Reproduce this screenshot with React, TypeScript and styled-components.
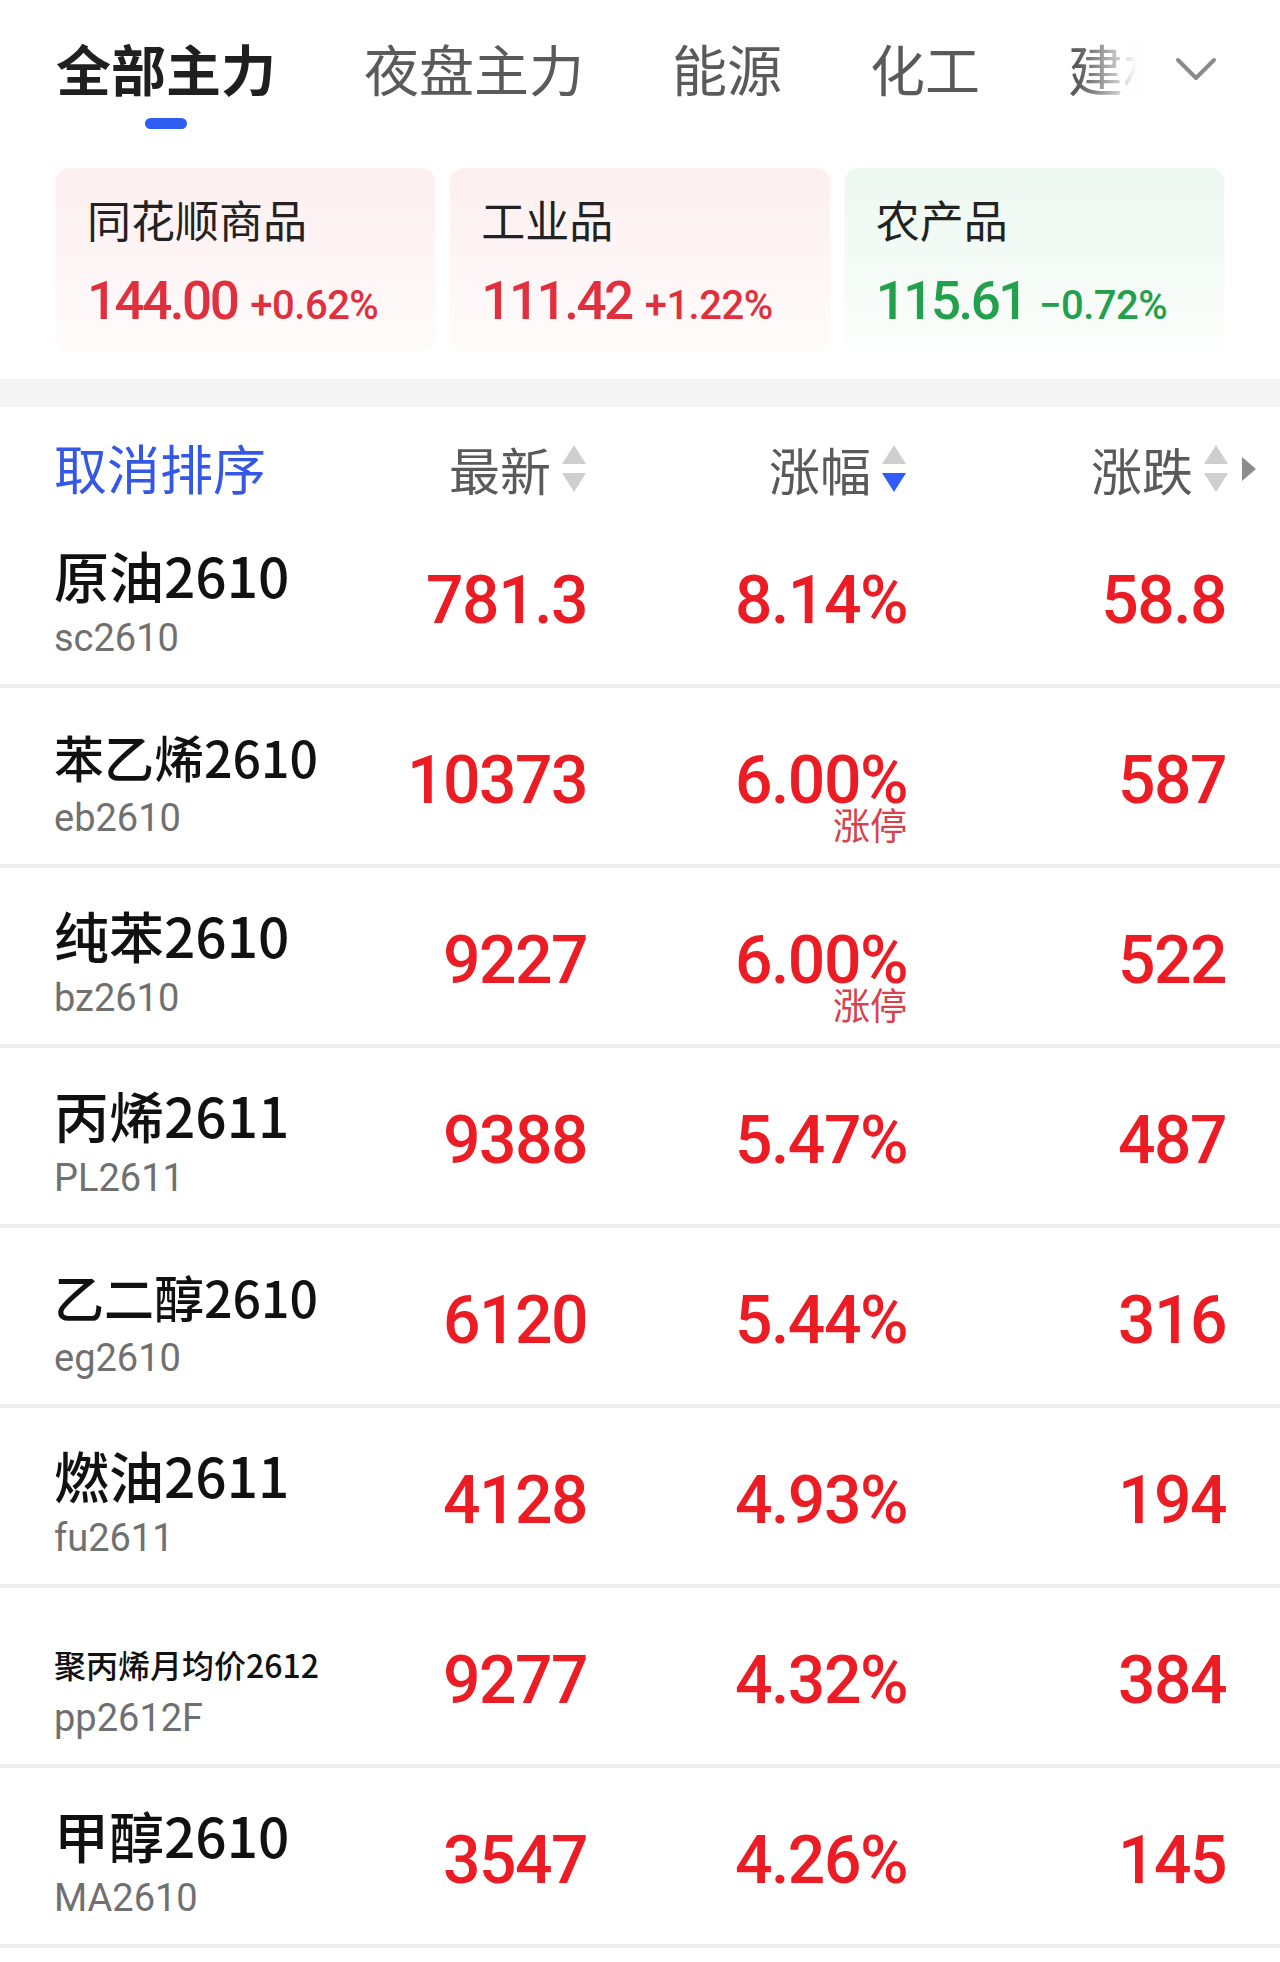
import React from "react";
import styled, { createGlobalStyle } from "styled-components";

const GlobalStyle = createGlobalStyle`
  html, body { margin: 0; padding: 0; background: #ffffff; }
  body {
    font-family: "Noto Sans CJK SC", "Noto Sans", sans-serif;
    -webkit-font-smoothing: antialiased;
  }
  * { box-sizing: border-box; }
`;

const Page = styled.div`
  width: 1280px;
  min-height: 1962px;
  background: #ffffff;
  overflow: hidden;
`;

/* ---------- Tabs ---------- */
const TabBar = styled.div`
  display: flex;
  align-items: flex-start;
  height: 168px;
  padding: 36px 0 0 56px;
`;

const TabStrip = styled.div`
  flex: 1;
  min-width: 0;
  display: flex;
  gap: 88px;
  overflow: hidden;
  white-space: nowrap;
  -webkit-mask-image: linear-gradient(to right, #000 calc(100% - 72px), transparent calc(100% - 12px));
  mask-image: linear-gradient(to right, #000 calc(100% - 72px), transparent calc(100% - 12px));
`;

const Tab = styled.div`
  flex-shrink: 0;
  display: flex;
  flex-direction: column;
  align-items: center;
`;

const TabLabel = styled.span<{ $active?: boolean }>`
  font-size: 55px;
  line-height: 62px;
  font-weight: ${(p) => (p.$active ? 700 : 400)};
  color: ${(p) => (p.$active ? "#1f1f1f" : "#5a5a5a")};
`;

const Indicator = styled.div`
  width: 42px;
  height: 11px;
  margin-top: 20px;
  border-radius: 6px;
  background: #2f5ef2;
`;

const MoreButton = styled.div`
  width: 130px;
  height: 66px;
  flex-shrink: 0;
  display: flex;
  align-items: center;
  padding-left: 25px;
`;

/* ---------- Index cards ---------- */
const CardRow = styled.div`
  display: grid;
  grid-template-columns: repeat(3, 1fr);
  gap: 15px;
  padding: 0 56px;
`;

const Card = styled.div<{ $tone: "up" | "down" }>`
  height: 182px;
  border-radius: 14px;
  padding: 25px 0 0 31px;
  background: ${(p) =>
    p.$tone === "up"
      ? "linear-gradient(180deg, #fdeff0 0%, #fef6f6 60%, #fffbfb 100%)"
      : "linear-gradient(180deg, #edf8f0 0%, #f5fbf7 60%, #fbfefc 100%)"};
  box-shadow: 0 1px 4px rgba(0, 0, 0, 0.025);
`;

const CardTitle = styled.div`
  font-size: 44px;
  line-height: 52px;
  color: #222222;
`;

const CardValues = styled.div<{ $tone: "up" | "down" }>`
  margin-top: 26px;
  height: 60px;
  display: flex;
  align-items: baseline;
  gap: 13px;
  font-family: Roboto, "Liberation Sans", sans-serif;
  color: ${(p) => (p.$tone === "up" ? "#e0303e" : "#22a04b")};
`;

const CardPrice = styled.span`
  font-size: 53px;
  line-height: 60px;
  font-weight: 500;
  letter-spacing: -2.5px;
`;

const CardChange = styled.span`
  font-size: 40px;
  line-height: 60px;
  font-weight: 500;
  letter-spacing: -0.5px;
`;

const Band = styled.div`
  margin-top: 29px;
  height: 28px;
  background: #f4f4f4;
`;

/* ---------- Table ---------- */
const columns = "270px 263px 320px 319px";

const HeaderRow = styled.div`
  display: grid;
  grid-template-columns: ${columns};
  padding: 22px 54px 0;
  height: 101px;
  align-items: center;
`;

const ResetSort = styled.div`
  font-size: 53px;
  line-height: 62px;
  color: #3557e6;
  margin-top: -4px;
`;

const HeaderCell = styled.div`
  display: flex;
  justify-content: flex-end;
  align-items: center;
  gap: 10px;
`;

const HeaderLabel = styled.span`
  font-size: 51px;
  line-height: 62px;
  color: #5a5a5a;
`;

const MoreColumns = styled.span`
  display: flex;
  margin-left: 2px;
  margin-right: -31px;
`;

const Row = styled.div`
  display: grid;
  grid-template-columns: ${columns};
  align-items: start;
  padding: 0 54px;
  height: 180px;
  border-bottom: 4px solid #efefef;
`;

const NameCell = styled.div`
  padding-top: 34px;
  display: flex;
  flex-direction: column;
`;

const NameLine = styled.div`
  font-size: 55px;
  line-height: 64px;
  height: 64px;
  white-space: nowrap;
  color: #111111;
`;

const NameText = styled.span<{ $size: number }>`
  font-size: ${(p) => p.$size}px;
  font-weight: 500;
`;

const Code = styled.div`
  margin-top: 10px;
  font-family: Roboto, "Liberation Sans", sans-serif;
  font-size: 38px;
  line-height: 44px;
  color: #707070;
`;

const ValueCell = styled.div`
  padding-top: 55px;
  display: flex;
  flex-direction: column;
  align-items: flex-end;
`;

const Value = styled.span`
  font-family: Roboto, "Liberation Sans", sans-serif;
  font-size: 66px;
  line-height: 76px;
  font-weight: 500;
  letter-spacing: -1.5px;
  color: #ec1c24;
`;

const LimitTag = styled.span`
  margin-top: -15px;
  font-size: 37px;
  line-height: 40px;
  color: #d6434c;
`;

/* ---------- Icons ---------- */
const Chevron = () => (
  <svg width="42" height="24" viewBox="0 0 42 24">
    <polyline
      points="3,3 21,21 39,3"
      fill="none"
      stroke="#8a8a8a"
      strokeWidth="4"
      strokeLinecap="round"
      strokeLinejoin="round"
    />
  </svg>
);

const SortIcon = ({ active }: { active?: "down" }) => (
  <svg width="26" height="49" viewBox="0 0 26 49">
    <path d="M13 1 L25 20 L1 20 Z" fill="#cfcfcf" />
    <path
      d="M1 29 L25 29 L13 48 Z"
      fill={active === "down" ? "#2f5bff" : "#cfcfcf"}
    />
  </svg>
);

const RightTriangle = () => (
  <svg width="16" height="26" viewBox="0 0 16 26">
    <path d="M1 1 L15 13 L1 25 Z" fill="#8c8c8c" />
  </svg>
);

/* ---------- Data ---------- */
const tabs = ["全部主力", "夜盘主力", "能源", "化工", "建材", "有色"];

const cards: { title: string; price: string; change: string; tone: "up" | "down" }[] = [
  { title: "同花顺商品", price: "144.00", change: "+0.62%", tone: "up" },
  { title: "工业品", price: "111.42", change: "+1.22%", tone: "up" },
  { title: "农产品", price: "115.61", change: "−0.72%", tone: "down" },
];

type Quote = {
  name: string;
  size: number;
  code: string;
  last: string;
  pct: string;
  chg: string;
  limit?: boolean;
};

const quotes: Quote[] = [
  { name: "原油2610", size: 55, code: "sc2610", last: "781.3", pct: "8.14%", chg: "58.8" },
  { name: "苯乙烯2610", size: 50, code: "eb2610", last: "10373", pct: "6.00%", chg: "587", limit: true },
  { name: "纯苯2610", size: 55, code: "bz2610", last: "9227", pct: "6.00%", chg: "522", limit: true },
  { name: "丙烯2611", size: 55, code: "PL2611", last: "9388", pct: "5.47%", chg: "487" },
  { name: "乙二醇2610", size: 50, code: "eg2610", last: "6120", pct: "5.44%", chg: "316" },
  { name: "燃油2611", size: 55, code: "fu2611", last: "4128", pct: "4.93%", chg: "194" },
  { name: "聚丙烯月均价2612", size: 32, code: "pp2612F", last: "9277", pct: "4.32%", chg: "384" },
  { name: "甲醇2610", size: 55, code: "MA2610", last: "3547", pct: "4.26%", chg: "145" },
];

export default function App() {
  return (
    <Page>
      <GlobalStyle />
      <TabBar>
        <TabStrip>
          {tabs.map((t, i) => (
            <Tab key={t}>
              <TabLabel $active={i === 0}>{t}</TabLabel>
              {i === 0 && <Indicator />}
            </Tab>
          ))}
        </TabStrip>
        <MoreButton>
          <Chevron />
        </MoreButton>
      </TabBar>

      <CardRow>
        {cards.map((c) => (
          <Card key={c.title} $tone={c.tone}>
            <CardTitle>{c.title}</CardTitle>
            <CardValues $tone={c.tone}>
              <CardPrice>{c.price}</CardPrice>
              <CardChange>{c.change}</CardChange>
            </CardValues>
          </Card>
        ))}
      </CardRow>

      <Band />

      <HeaderRow>
        <ResetSort>取消排序</ResetSort>
        <HeaderCell>
          <HeaderLabel>最新</HeaderLabel>
          <SortIcon />
        </HeaderCell>
        <HeaderCell>
          <HeaderLabel>涨幅</HeaderLabel>
          <SortIcon active="down" />
        </HeaderCell>
        <HeaderCell>
          <HeaderLabel>涨跌</HeaderLabel>
          <SortIcon />
          <MoreColumns>
            <RightTriangle />
          </MoreColumns>
        </HeaderCell>
      </HeaderRow>

      {quotes.map((q) => (
        <Row key={q.code}>
          <NameCell>
            <NameLine>
              <NameText $size={q.size}>{q.name}</NameText>
            </NameLine>
            <Code>{q.code}</Code>
          </NameCell>
          <ValueCell>
            <Value>{q.last}</Value>
          </ValueCell>
          <ValueCell>
            <Value>{q.pct}</Value>
            {q.limit && <LimitTag>涨停</LimitTag>}
          </ValueCell>
          <ValueCell>
            <Value>{q.chg}</Value>
          </ValueCell>
        </Row>
      ))}
    </Page>
  );
}
